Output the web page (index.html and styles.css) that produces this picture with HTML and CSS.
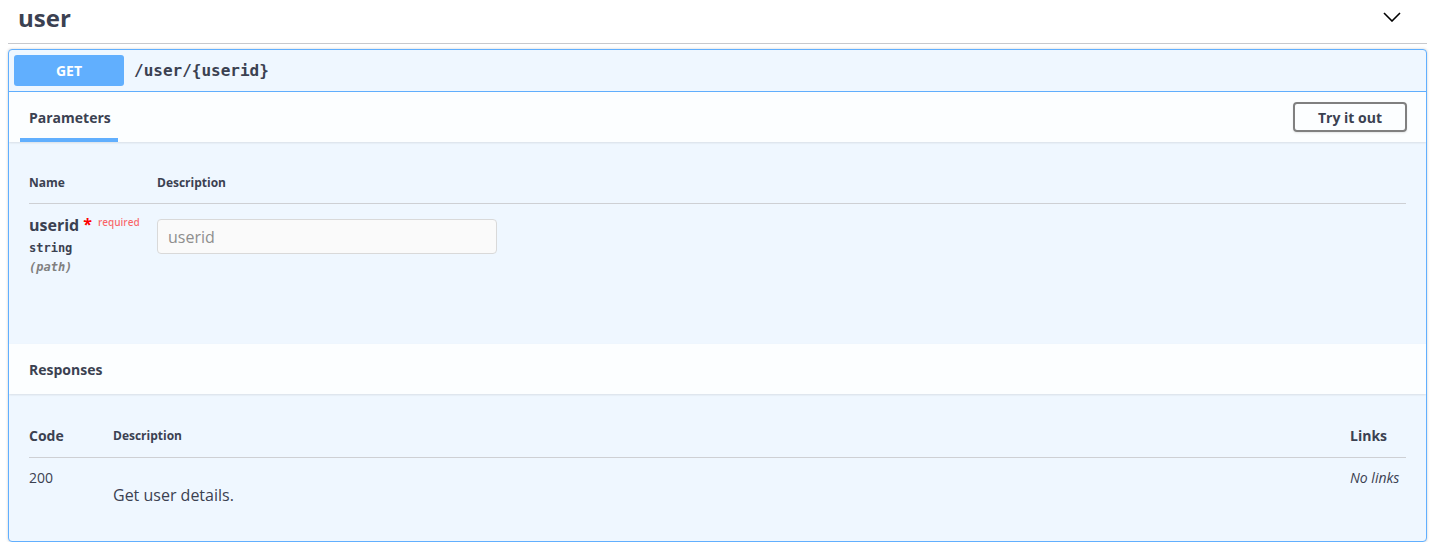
FILE: index.html
```html
<!DOCTYPE html>
<html>
<head>
<meta charset="utf-8">
<link rel="stylesheet" href="styles.css">
</head>
<body>
<div class="wrapper">
  <h3 class="tag">
    <span class="tag-name">user</span>
    <svg class="chevron" width="18" height="10" viewBox="0 0 18 10"><polyline points="1,1 9,9 17,1" fill="none" stroke="#000" stroke-width="1.6"/></svg>
  </h3>
  <div class="opblock">
    <div class="summary">
      <span class="method">GET</span>
      <span class="path">/user/{userid}</span>
    </div>
    <div class="section-header">
      <div class="tab">Parameters</div>
      <button class="try">Try it out</button>
    </div>
    <div class="params-body">
      <div class="ptable">
        <div class="prow phead">
          <div class="col-name">Name</div>
          <div class="col-desc">Description</div>
        </div>
        <div class="prow">
          <div class="col-name">
            <div class="pname">userid<span class="star">*</span><span class="req">required</span></div>
            <div class="ptype">string</div>
            <div class="pin">(path)</div>
          </div>
          <div class="col-desc">
            <input class="pinput" type="text" placeholder="userid">
          </div>
        </div>
      </div>
    </div>
    <div class="section-header resp-header">
      <div class="resp-title">Responses</div>
    </div>
    <div class="resp-body">
      <div class="rrow rhead">
        <div class="rc-code">Code</div>
        <div class="rc-desc small">Description</div>
        <div class="rc-links">Links</div>
      </div>
      <div class="rrow">
        <div class="rc-code normal">200</div>
        <div class="rc-desc normal desc-text">Get user details.</div>
        <div class="rc-links normal nolinks">No links</div>
      </div>
    </div>
  </div>
</div>
</body>
</html>
```
FILE: styles.css
```css
* { box-sizing: border-box; }
html, body { margin: 0; padding: 0; background: #fff; }
body {
  font-family: "Open Sans", sans-serif;
  color: #3b4151;
}
.wrapper { padding: 0 8px; }

.tag {
  margin: 0 0 5px 0;
  display: flex;
  justify-content: space-between;
  align-items: flex-start;
  padding: 0 26px 7px 10px;
  border-bottom: 1px solid #c8c9cd;
  font-size: 24px;
  font-weight: 700;
  line-height: 36px;
  color: #3b4151;
}
.chevron { margin-top: 12px; display: block; }

.opblock {
  border: 1px solid #61affe;
  background: #eff7ff;
  border-radius: 4px;
  box-shadow: 0 0 3px rgba(0,0,0,.19);
  overflow: hidden;
}
.summary {
  display: flex;
  align-items: center;
  padding: 5px;
  border-bottom: 1px solid #61affe;
}
.method {
  width: 110px;
  height: 31px;
  display: flex;
  align-items: center;
  justify-content: center;
  background: #61affe;
  color: #fff;
  font-size: 14px;
  font-weight: 700;
  border-radius: 3px;
}
.path {
  padding: 0 10px;
  font-family: "DejaVu Sans Mono", monospace;
  font-weight: 700;
  font-size: 16px;
  color: #3b4151;
}
.section-header {
  height: 50px;
  display: flex;
  align-items: stretch;
  justify-content: space-between;
  padding: 0 20px;
  background: rgba(255,255,255,.8);
  box-shadow: 0 1px 2px rgba(0,0,0,.1);
  position: relative;
}
.tab {
  display: flex;
  align-items: center;
  padding: 4px 7px 0 9px;
  margin-left: -9px;
  font-size: 14px;
  font-weight: 700;
  border-bottom: 4px solid #61affe;
}
.try {
  align-self: center;
  width: 114px;
  height: 30px;
  margin-right: -1px;
  background: transparent;
  border: 2px solid #808080;
  border-radius: 4px;
  font-family: "Open Sans", sans-serif;
  font-size: 14px;
  font-weight: 700;
  color: #3b4151;
  padding: 0;
  box-shadow: 0 1px 2px rgba(0,0,0,.1);
}
.params-body {
  padding: 20px 20px 0 20px;
  height: 202px;
}
.prow { display: flex; }
.phead {
  border-bottom: 1px solid #ced0d4;
  font-size: 12px;
  font-weight: 700;
  line-height: 18px;
  padding: 12px 0 11px;
}
.col-name { width: 128px; flex: none; }
.col-desc { flex: 1; }
.prow:not(.phead) .col-name { padding-top: 10px; }
.prow:not(.phead) .col-desc { padding-top: 15px; }
.pname {
  font-size: 16px;
  font-weight: 700;
  line-height: 22px;
}
.star { color: red; font-size: 16px; margin-left: 4px; position: relative; top: -1px; }
.req {
  color: rgba(255,0,0,.6);
  font-size: 10px;
  font-weight: 600;
  position: relative;
  top: -5px;
  margin-left: 6px;
}
.ptype {
  font-family: "DejaVu Sans Mono", monospace;
  font-size: 12px;
  font-weight: 700;
  line-height: 18px;
  padding-top: 1px;
}
.pin {
  font-family: "DejaVu Sans Mono", monospace;
  font-size: 12px;
  font-style: italic;
  font-weight: 700;
  color: #808080;
  line-height: 18px;
  padding-top: 1px;
}
.pinput {
  width: 340px;
  height: 35px;
  border: 1px solid #d9d9d9;
  border-radius: 4px;
  background: #fafafa;
  padding: 0 10px;
  font-family: "Open Sans", sans-serif;
  font-size: 16px;
  color: #3b4151;
}
.pinput::placeholder { color: #8e8e8e; }

.resp-title {
  display: flex;
  align-items: center;
  font-size: 14px;
  font-weight: 700;
}
.resp-body {
  padding: 20px 20px 0 20px;
  height: 147px;
}
.rrow { display: flex; }
.rhead {
  border-bottom: 1px solid #ced0d4;
  padding: 12px 0 11px;
  line-height: 20px;
  font-size: 14px;
  font-weight: 700;
}
.rc-code { width: 84px; flex: none; }
.rc-desc { flex: 1; }
.rc-links { width: 56px; flex: none; }
.small { font-size: 12px; }
.normal {
  font-size: 14px;
  font-weight: 400;
  line-height: 20px;
  padding-top: 10px;
}
.desc-text { font-size: 16px; line-height: 22px; padding-top: 26px; }
.nolinks { font-style: italic; }
```
